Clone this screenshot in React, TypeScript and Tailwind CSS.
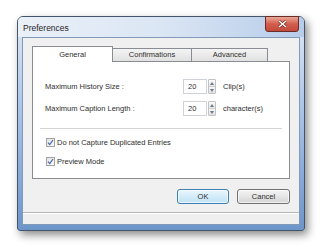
import React from "react";

function Spinner() {
  return (
    <div className="flex h-[15px] w-[8px] flex-col overflow-hidden rounded-[1px] border border-[#c2c2c2]">
      <div className="flex flex-1 items-center justify-center border-b border-[#d0d0d0] bg-gradient-to-b from-[#fbfbfb] to-[#e8e8e8]">
        <svg width="4" height="3" viewBox="0 0 4 3">
          <path d="M0 3 L2 0 L4 3Z" fill="#6d7890" />
        </svg>
      </div>
      <div className="flex flex-1 items-center justify-center bg-gradient-to-b from-[#f6f6f6] to-[#e2e2e2]">
        <svg width="4" height="3" viewBox="0 0 4 3">
          <path d="M0 0 L4 0 L2 3Z" fill="#6d7890" />
        </svg>
      </div>
    </div>
  );
}

function NumberRow({ label, unit }: { label: string; unit: string }) {
  return (
    <div className="flex h-[15px] items-center">
      <span className="w-[138px]">{label}</span>
      <div className="flex h-[15px] w-[24px] items-center border border-[#cfd2d8] bg-white pl-[4px]">
        20
      </div>
      <div className="ml-[1px]">
        <Spinner />
      </div>
      <span className="ml-[7px]">{unit}</span>
    </div>
  );
}

function Check({ label }: { label: string }) {
  return (
    <div className="flex h-[9px] items-center gap-[2px]">
      <div className="flex h-[9px] w-[9px] items-center justify-center border border-[#a3a3a3] bg-gradient-to-br from-[#e3e3e3] to-[#fbfbfb]">
        <svg width="7" height="7" viewBox="0 0 7 7">
          <path d="M1 3.6 L2.8 5.6 L6 1" stroke="#4868a3" strokeWidth="1.2" fill="none" />
        </svg>
      </div>
      <span>{label}</span>
    </div>
  );
}

export default function App() {
  return (
    <div className="h-[247px] w-[320px] overflow-hidden bg-white pl-[17px] pt-[16px] font-['Liberation_Sans',Arial,sans-serif] text-[7.5px] leading-none text-[#2e2e2e]">
      {/* Window */}
      <div className="flex h-[215px] w-[288px] flex-col rounded-t-[6px] rounded-b-[3px] border border-[#44546b] bg-gradient-to-b from-[#dfe8f5] via-[#a3bfe5] to-[#6c95ca] px-[4px] pb-[5px] shadow-[3px_4px_8px_rgba(0,0,0,0.45)]">
        {/* Title bar */}
        <div className="-mx-[4px] flex h-[20px] items-start rounded-t-[5px] bg-gradient-to-r from-[#eaf0f8] via-[#dbe6f4] to-[#b6cce9] px-[5px]">
          <span className="mt-[7px] text-[8.5px] text-[#262626]">Preferences</span>
          <div className="ml-auto flex h-[16px] w-[34px] -mt-[1px] items-center justify-center rounded-b-[3px] border border-[#6b2c28] bg-gradient-to-b from-[#e9a797] via-[#d35d4d] to-[#c34a3b]">
            <svg width="9" height="8" viewBox="0 0 9 8">
              <path d="M1 1 L8 7 M8 1 L1 7" stroke="#5a1f1a" strokeWidth="2.6" />
              <path d="M1 1 L8 7 M8 1 L1 7" stroke="#ffffff" strokeWidth="1.6" />
            </svg>
          </div>
        </div>

        {/* Client area */}
        <div className="flex flex-1 flex-col border border-[#8299b8] bg-[#f0f0f0]">
          <div className="flex flex-col px-[9px] pt-[8px]">
            {/* Tabs */}
            <div className="flex h-[15px] items-end">
              <div className="relative z-10 -mb-px flex h-[16px] w-[81px] items-center justify-center border border-b-0 border-[#898c95] bg-white">
                General
              </div>
              <div className="flex h-[13px] w-[79px] items-center justify-center border border-l-0 border-b-0 border-[#898c95] bg-gradient-to-b from-[#f4f4f4] to-[#e1e1e1]">
                Confirmations
              </div>
              <div className="flex h-[13px] w-[76px] items-center justify-center border border-l-0 border-b-0 border-[#898c95] bg-gradient-to-b from-[#f4f4f4] to-[#e1e1e1]">
                Advanced
              </div>
            </div>

            {/* Panel */}
            <div className="flex h-[118px] flex-col border border-[#898c95] bg-white px-[12px] pt-[17px]">
              <div className="flex flex-col gap-[7px]">
                <NumberRow label="Maximum History Size :" unit="Clip(s)" />
                <NumberRow label="Maximum Caption Length :" unit="character(s)" />
              </div>
              <div className="-mx-[5px] mt-[12px] h-px bg-[#d5d5d5]" />
              <div className="mt-[9px] flex flex-col gap-[10px] pl-[1px]">
                <Check label="Do not Capture Duplicated Entries" />
                <Check label="Preview Mode" />
              </div>
            </div>

            {/* Buttons */}
            <div className="mt-[10px] flex justify-end gap-[8px]">
              <button className="flex h-[15px] w-[52px] items-center justify-center rounded-[3px] border border-[#3c7fb1] bg-gradient-to-b from-[#eaf6fd] via-[#d3ecf9] to-[#bfe2f4] text-[7.5px] shadow-[inset_0_0_0_1px_rgba(255,255,255,0.7)]">
                OK
              </button>
              <button className="flex h-[15px] w-[53px] items-center justify-center rounded-[3px] border border-[#707070] bg-gradient-to-b from-[#f4f4f4] via-[#e6e6e6] to-[#d3d3d3] text-[7.5px] shadow-[inset_0_0_0_1px_rgba(255,255,255,0.7)]">
                Cancel
              </button>
            </div>
          </div>
          <div className="mt-[8px] h-px bg-[#b6b6b6]" />
          <div className="flex-1 border-t border-white bg-[#efefef]" />
        </div>
      </div>
    </div>
  );
}
